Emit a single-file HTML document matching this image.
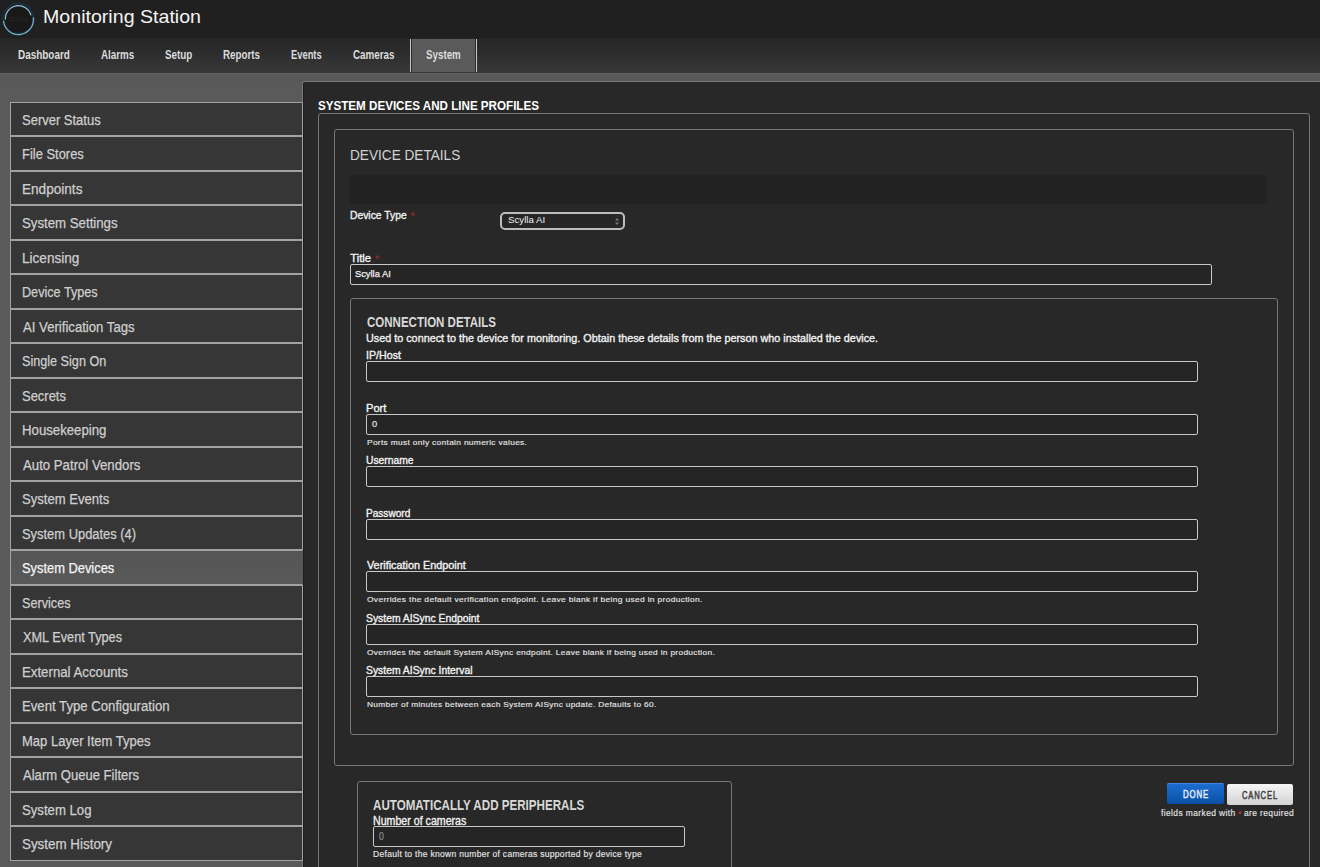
<!DOCTYPE html><html><head><meta charset="utf-8"><style>
*{margin:0;padding:0;box-sizing:border-box}
html,body{width:1320px;height:867px;overflow:hidden;background:#5a5a5a;font-family:"Liberation Sans",sans-serif}
.a{position:absolute}
.t{position:absolute;white-space:pre;transform-origin:0 0}
.fs{position:absolute;border:1px solid #777;border-radius:3px}
.inp{position:absolute;border:1px solid #c8c8c8;border-radius:2px;background:#252525}
.si{position:absolute;left:10px;width:293px;background:#363636;border:1px solid #a2a2a2}
</style></head><body>
<div class="a" style="left:0px;top:0px;width:1320px;height:38px;background:#202020"></div>
<div class="a" style="left:0px;top:38px;width:1320px;height:35px;background:linear-gradient(#252525,#383838)"></div>
<div class="a" style="left:410px;top:39px;width:1px;height:33px;background:#c8c8c8"></div>
<div class="a" style="left:411px;top:39px;width:1px;height:33px;background:#2a2a2a"></div>
<div class="a" style="left:412px;top:39px;width:63px;height:33px;background:#5a5a5a"></div>
<svg class="a" style="left:0px;top:0px" width="40" height="40" viewBox="0 0 40 40">
 <circle cx="18.4" cy="18.7" r="15.2" fill="#191919" stroke="#1b2c3d" stroke-width="2.2"/>
 <text x="18.4" y="20.8" text-anchor="middle" font-family="Liberation Sans" font-size="6" fill="#2a2a2a" textLength="20" lengthAdjust="spacingAndGlyphs">SCYLLA</text>
 <path d="M30.96 15.34 A13 13 0 0 0 5.43 19.61" fill="none" stroke="#90c4d4" stroke-width="1.2"/>
 <path d="M3.55 20.79 A15 15 0 1 0 33.34 17.39" fill="none" stroke="#74b0c4" stroke-width="1.3"/>
</svg>
<div class="a" style="left:475px;top:39px;width:1px;height:33px;background:#2a2a2a"></div>
<div class="a" style="left:476px;top:39px;width:1px;height:33px;background:#c8c8c8"></div>
<div class="a" style="left:0px;top:73px;width:1320px;height:8px;background:linear-gradient(#5c5c5c,#575757)"></div>
<div class="a" style="left:302px;top:81px;width:1100px;height:900px;background:#282828;border:1px solid #7a7a7a;border-radius:3px;box-shadow:inset 1px 0 0 #1e1e1e"></div>
<div class="si" style="top:102px;height:34px;"></div>
<div class="si" style="top:136px;height:35px;"></div>
<div class="si" style="top:171px;height:34px;"></div>
<div class="si" style="top:205px;height:35px;"></div>
<div class="si" style="top:240px;height:34px;"></div>
<div class="si" style="top:274px;height:35px;"></div>
<div class="si" style="top:309px;height:34px;"></div>
<div class="si" style="top:343px;height:35px;"></div>
<div class="si" style="top:378px;height:34px;"></div>
<div class="si" style="top:412px;height:35px;"></div>
<div class="si" style="top:447px;height:34px;"></div>
<div class="si" style="top:481px;height:35px;"></div>
<div class="si" style="top:516px;height:34px;"></div>
<div class="si" style="top:550px;height:35px;background:linear-gradient(#555,#595959);border-right-color:#575757"></div>
<div class="si" style="top:585px;height:34px;"></div>
<div class="si" style="top:619px;height:35px;"></div>
<div class="si" style="top:654px;height:34px;"></div>
<div class="si" style="top:688px;height:35px;"></div>
<div class="si" style="top:723px;height:34px;"></div>
<div class="si" style="top:757px;height:35px;"></div>
<div class="si" style="top:792px;height:34px;"></div>
<div class="si" style="top:826px;height:35px;"></div>
<div class="fs" style="left:318px;top:113px;width:992px;height:900px"></div>
<div class="fs" style="left:334px;top:129px;width:960px;height:637px"></div>
<div class="a" style="left:350px;top:175px;width:917px;height:29px;background:#222"></div>
<div class="fs" style="left:350px;top:298px;width:928px;height:437px"></div>
<div class="fs" style="left:357px;top:781px;width:375px;height:200px"></div>
<div class="a" style="left:500px;top:212px;width:125px;height:18px;border:2px solid #bdbdbd;border-radius:5px;background:#262626"></div>
<svg class="a" style="left:614px;top:217px" width="6" height="9" viewBox="0 0 6 9"><path d="M3 1 L5 3.5 H1Z M3 8 L5 5.5 H1Z" fill="#7a7a7a"/></svg>
<div class="inp" style="left:350px;top:264px;width:862px;height:21px"></div>
<div class="inp" style="left:366px;top:361px;width:832px;height:21px"></div>
<div class="inp" style="left:366px;top:414px;width:832px;height:21px"></div>
<div class="inp" style="left:366px;top:466px;width:832px;height:21px"></div>
<div class="inp" style="left:366px;top:519px;width:832px;height:21px"></div>
<div class="inp" style="left:366px;top:571px;width:832px;height:21px"></div>
<div class="inp" style="left:366px;top:624px;width:832px;height:21px"></div>
<div class="inp" style="left:366px;top:676px;width:832px;height:21px"></div>
<div class="inp" style="left:373px;top:826px;width:312px;height:21px"></div>
<div class="a" style="left:1167px;top:783px;width:57px;height:21px;background:linear-gradient(#1d6fd2,#0a50a6);border-radius:2px;box-shadow:inset 0 1px 0 #3a86e0"></div>
<div class="a" style="left:1227px;top:784px;width:66px;height:21px;background:linear-gradient(#f6f6f6,#d2d2d2);border-radius:2px"></div>
<div class="a" style="left:410.5px;top:209.5px;font:bold 11px/12px 'Liberation Sans';color:#872a2a">*</div>
<div class="a" style="left:375px;top:252.5px;font:bold 11px/12px 'Liberation Sans';color:#872a2a">*</div>
<div class="a" style="left:1238px;top:809px;font:bold 9px/10px 'Liberation Sans';color:#a83232">*</div>
<div class="t" style="left:43.47px;top:7px;font-size:19.0px;line-height:19.0px;font-weight:normal;color:#f4f4f4;transform:scaleX(1.0318);">Monitoring Station</div>
<div class="t" style="left:17.77px;top:49px;font-size:12.0px;line-height:12.0px;font-weight:bold;color:#dcdcdc;transform:scaleX(0.8279);">Dashboard</div>
<div class="t" style="left:101.20px;top:49px;font-size:12.0px;line-height:12.0px;font-weight:bold;color:#dcdcdc;transform:scaleX(0.8150);">Alarms</div>
<div class="t" style="left:164.78px;top:49px;font-size:12.0px;line-height:12.0px;font-weight:bold;color:#dcdcdc;transform:scaleX(0.8187);">Setup</div>
<div class="t" style="left:222.89px;top:49px;font-size:12.0px;line-height:12.0px;font-weight:bold;color:#dcdcdc;transform:scaleX(0.8136);">Reports</div>
<div class="t" style="left:291.22px;top:49px;font-size:12.0px;line-height:12.0px;font-weight:bold;color:#dcdcdc;transform:scaleX(0.7789);">Events</div>
<div class="t" style="left:353.10px;top:49px;font-size:12.0px;line-height:12.0px;font-weight:bold;color:#dcdcdc;transform:scaleX(0.8160);">Cameras</div>
<div class="t" style="left:426.19px;top:49px;font-size:12.0px;line-height:12.0px;font-weight:bold;color:#dcdcdc;transform:scaleX(0.8146);">System</div>
<div class="t" style="left:21.67px;top:113px;font-size:14.0px;line-height:14.0px;font-weight:normal;color:#cfcfcf;transform:scaleX(0.9274);-webkit-text-stroke:0.25px #cfcfcf;">Server Status</div>
<div class="t" style="left:21.68px;top:147px;font-size:14.0px;line-height:14.0px;font-weight:normal;color:#cfcfcf;transform:scaleX(0.9242);-webkit-text-stroke:0.25px #cfcfcf;">File Stores</div>
<div class="t" style="left:21.63px;top:182px;font-size:14.0px;line-height:14.0px;font-weight:normal;color:#cfcfcf;transform:scaleX(0.9705);-webkit-text-stroke:0.25px #cfcfcf;">Endpoints</div>
<div class="t" style="left:21.66px;top:216px;font-size:14.0px;line-height:14.0px;font-weight:normal;color:#cfcfcf;transform:scaleX(0.9450);-webkit-text-stroke:0.25px #cfcfcf;">System Settings</div>
<div class="t" style="left:21.63px;top:251px;font-size:14.0px;line-height:14.0px;font-weight:normal;color:#cfcfcf;transform:scaleX(0.9702);-webkit-text-stroke:0.25px #cfcfcf;">Licensing</div>
<div class="t" style="left:21.70px;top:285px;font-size:14.0px;line-height:14.0px;font-weight:normal;color:#cfcfcf;transform:scaleX(0.9024);-webkit-text-stroke:0.25px #cfcfcf;">Device Types</div>
<div class="t" style="left:22.60px;top:320px;font-size:14.0px;line-height:14.0px;font-weight:normal;color:#cfcfcf;transform:scaleX(0.9395);-webkit-text-stroke:0.25px #cfcfcf;">AI Verification Tags</div>
<div class="t" style="left:21.70px;top:354px;font-size:14.0px;line-height:14.0px;font-weight:normal;color:#cfcfcf;transform:scaleX(0.9022);-webkit-text-stroke:0.25px #cfcfcf;">Single Sign On</div>
<div class="t" style="left:21.67px;top:389px;font-size:14.0px;line-height:14.0px;font-weight:normal;color:#cfcfcf;transform:scaleX(0.9261);-webkit-text-stroke:0.25px #cfcfcf;">Secrets</div>
<div class="t" style="left:21.66px;top:423px;font-size:14.0px;line-height:14.0px;font-weight:normal;color:#cfcfcf;transform:scaleX(0.9432);-webkit-text-stroke:0.25px #cfcfcf;">Housekeeping</div>
<div class="t" style="left:22.60px;top:458px;font-size:14.0px;line-height:14.0px;font-weight:normal;color:#cfcfcf;transform:scaleX(0.9427);-webkit-text-stroke:0.25px #cfcfcf;">Auto Patrol Vendors</div>
<div class="t" style="left:21.67px;top:492px;font-size:14.0px;line-height:14.0px;font-weight:normal;color:#cfcfcf;transform:scaleX(0.9348);-webkit-text-stroke:0.25px #cfcfcf;">System Events</div>
<div class="t" style="left:21.68px;top:527px;font-size:14.0px;line-height:14.0px;font-weight:normal;color:#cfcfcf;transform:scaleX(0.9221);-webkit-text-stroke:0.25px #cfcfcf;">System Updates (4)</div>
<div class="t" style="left:21.68px;top:561px;font-size:14.0px;line-height:14.0px;font-weight:normal;color:#f4f4f4;transform:scaleX(0.9192);-webkit-text-stroke:0.25px #f4f4f4;">System Devices</div>
<div class="t" style="left:21.70px;top:596px;font-size:14.0px;line-height:14.0px;font-weight:normal;color:#cfcfcf;transform:scaleX(0.9038);-webkit-text-stroke:0.25px #cfcfcf;">Services</div>
<div class="t" style="left:22.60px;top:630px;font-size:14.0px;line-height:14.0px;font-weight:normal;color:#cfcfcf;transform:scaleX(0.9092);-webkit-text-stroke:0.25px #cfcfcf;">XML Event Types</div>
<div class="t" style="left:21.65px;top:665px;font-size:14.0px;line-height:14.0px;font-weight:normal;color:#cfcfcf;transform:scaleX(0.9450);-webkit-text-stroke:0.25px #cfcfcf;">External Accounts</div>
<div class="t" style="left:21.66px;top:699px;font-size:14.0px;line-height:14.0px;font-weight:normal;color:#cfcfcf;transform:scaleX(0.9400);-webkit-text-stroke:0.25px #cfcfcf;">Event Type Configuration</div>
<div class="t" style="left:21.67px;top:734px;font-size:14.0px;line-height:14.0px;font-weight:normal;color:#cfcfcf;transform:scaleX(0.9292);-webkit-text-stroke:0.25px #cfcfcf;">Map Layer Item Types</div>
<div class="t" style="left:22.60px;top:768px;font-size:14.0px;line-height:14.0px;font-weight:normal;color:#cfcfcf;transform:scaleX(0.9331);-webkit-text-stroke:0.25px #cfcfcf;">Alarm Queue Filters</div>
<div class="t" style="left:21.66px;top:803px;font-size:14.0px;line-height:14.0px;font-weight:normal;color:#cfcfcf;transform:scaleX(0.9403);-webkit-text-stroke:0.25px #cfcfcf;">System Log</div>
<div class="t" style="left:21.64px;top:837px;font-size:14.0px;line-height:14.0px;font-weight:normal;color:#cfcfcf;transform:scaleX(0.9559);-webkit-text-stroke:0.25px #cfcfcf;">System History</div>
<div class="t" style="left:317.64px;top:99px;font-size:13.5px;line-height:13.5px;font-weight:bold;color:#ffffff;transform:scaleX(0.8605);">SYSTEM DEVICES AND LINE PROFILES</div>
<div class="t" style="left:350.21px;top:147px;font-size:15.25px;line-height:15.25px;font-weight:normal;color:#d2d2d2;transform:scaleX(0.8934);">DEVICE DETAILS</div>
<div class="t" style="left:349.98px;top:210px;font-size:11.25px;line-height:11.25px;font-weight:normal;color:#f2f2f2;transform:scaleX(0.9180);-webkit-text-stroke:0.35px #f2f2f2;">Device Type</div>
<div class="t" style="left:507.71px;top:215px;font-size:9.75px;line-height:9.75px;font-weight:normal;color:#f0f0f0;transform:scaleX(0.9944);">Scylla AI</div>
<div class="t" style="left:350.20px;top:253px;font-size:11.25px;line-height:11.25px;font-weight:normal;color:#f2f2f2;transform:scaleX(1.0000);-webkit-text-stroke:0.35px #f2f2f2;">Title</div>
<div class="t" style="left:354.84px;top:269px;font-size:9.75px;line-height:9.75px;font-weight:normal;color:#f4f4f4;transform:scaleX(0.9556);-webkit-text-stroke:0.25px #f4f4f4;">Scylla AI</div>
<div class="t" style="left:367.00px;top:315px;font-size:14.25px;line-height:14.25px;font-weight:bold;color:#d8d8d8;transform:scaleX(0.8082);">CONNECTION DETAILS</div>
<div class="t" style="left:365.94px;top:333px;font-size:11.25px;line-height:11.25px;font-weight:normal;color:#f2f2f2;transform:scaleX(0.9600);-webkit-text-stroke:0.35px #f2f2f2;">Used to connect to the device for monitoring. Obtain these details from the person who installed the device.</div>
<div class="t" style="left:365.89px;top:350px;font-size:10.5px;line-height:10.5px;font-weight:normal;color:#f2f2f2;transform:scaleX(1.0147);-webkit-text-stroke:0.35px #f2f2f2;">IP/Host</div>
<div class="t" style="left:365.74px;top:403px;font-size:10.5px;line-height:10.5px;font-weight:normal;color:#f2f2f2;transform:scaleX(1.0556);-webkit-text-stroke:0.35px #f2f2f2;">Port</div>
<div class="t" style="left:372.10px;top:419px;font-size:9.5px;line-height:9.5px;font-weight:normal;color:#f0f0f0;transform:scaleX(0.9800);-webkit-text-stroke:0.15px #f0f0f0;">0</div>
<div class="t" style="left:366.80px;top:439px;font-size:8.0px;line-height:8.0px;font-weight:normal;color:#e4e4e4;transform:scaleX(1.0467);-webkit-text-stroke:0.15px #e4e4e4;letter-spacing:0.3px">Ports must only contain numeric values.</div>
<div class="t" style="left:365.82px;top:455px;font-size:10.5px;line-height:10.5px;font-weight:normal;color:#f2f2f2;transform:scaleX(0.9830);-webkit-text-stroke:0.35px #f2f2f2;">Username</div>
<div class="t" style="left:365.84px;top:508px;font-size:10.5px;line-height:10.5px;font-weight:normal;color:#f2f2f2;transform:scaleX(0.9600);-webkit-text-stroke:0.35px #f2f2f2;">Password</div>
<div class="t" style="left:366.80px;top:560px;font-size:10.5px;line-height:10.5px;font-weight:normal;color:#f2f2f2;transform:scaleX(1.0312);-webkit-text-stroke:0.35px #f2f2f2;">Verification Endpoint</div>
<div class="t" style="left:366.80px;top:596px;font-size:8.0px;line-height:8.0px;font-weight:normal;color:#e4e4e4;transform:scaleX(1.0538);-webkit-text-stroke:0.15px #e4e4e4;letter-spacing:0.3px">Overrides the default verification endpoint. Leave blank if being used in production.</div>
<div class="t" style="left:365.61px;top:613px;font-size:10.5px;line-height:10.5px;font-weight:normal;color:#f2f2f2;transform:scaleX(0.9860);-webkit-text-stroke:0.35px #f2f2f2;">System AISync Endpoint</div>
<div class="t" style="left:366.80px;top:649px;font-size:8.0px;line-height:8.0px;font-weight:normal;color:#e4e4e4;transform:scaleX(1.0407);-webkit-text-stroke:0.15px #e4e4e4;letter-spacing:0.3px">Overrides the default System AISync endpoint. Leave blank if being used in production.</div>
<div class="t" style="left:365.61px;top:665px;font-size:10.5px;line-height:10.5px;font-weight:normal;color:#f2f2f2;transform:scaleX(0.9869);-webkit-text-stroke:0.35px #f2f2f2;">System AISync Interval</div>
<div class="t" style="left:366.80px;top:701px;font-size:8.0px;line-height:8.0px;font-weight:normal;color:#e4e4e4;transform:scaleX(1.0385);-webkit-text-stroke:0.15px #e4e4e4;letter-spacing:0.3px">Number of minutes between each System AISync update. Defaults to 60.</div>
<div class="t" style="left:373.30px;top:798px;font-size:14.0px;line-height:14.0px;font-weight:bold;color:#d8d8d8;transform:scaleX(0.8290);">AUTOMATICALLY ADD PERIPHERALS</div>
<div class="t" style="left:373.41px;top:815px;font-size:12.0px;line-height:12.0px;font-weight:normal;color:#f2f2f2;transform:scaleX(0.8856);-webkit-text-stroke:0.35px #f2f2f2;">Number of cameras</div>
<div class="t" style="left:378.80px;top:832px;font-size:10.0px;line-height:10.0px;font-weight:normal;color:#8a8a8a;transform:scaleX(0.8600);-webkit-text-stroke:0.25px #8a8a8a;">0</div>
<div class="t" style="left:373.30px;top:850px;font-size:8.5px;line-height:8.5px;font-weight:normal;color:#e4e4e4;transform:scaleX(1.0004);-webkit-text-stroke:0.15px #e4e4e4;letter-spacing:0.3px">Default to the known number of cameras supported by device type</div>
<div class="t" style="left:1182.90px;top:789px;font-size:10.5px;line-height:10.5px;font-weight:normal;color:#e6eef8;transform:scaleX(0.7471);-webkit-text-stroke:0.25px #e6eef8;letter-spacing:1.2px;-webkit-text-stroke:0.45px currentColor">DONE</div>
<div class="t" style="left:1242.20px;top:790px;font-size:10.5px;line-height:10.5px;font-weight:normal;color:#3a3a3a;transform:scaleX(0.7224);-webkit-text-stroke:0.25px #3a3a3a;letter-spacing:1.2px;-webkit-text-stroke:0.45px currentColor">CANCEL</div>
<div class="t" style="left:1161.30px;top:809px;font-size:8.5px;line-height:8.5px;font-weight:normal;color:#e4e4e4;transform:scaleX(0.9925);-webkit-text-stroke:0.15px #e4e4e4;letter-spacing:0.4px">fields marked with   are required</div>
</body></html>
